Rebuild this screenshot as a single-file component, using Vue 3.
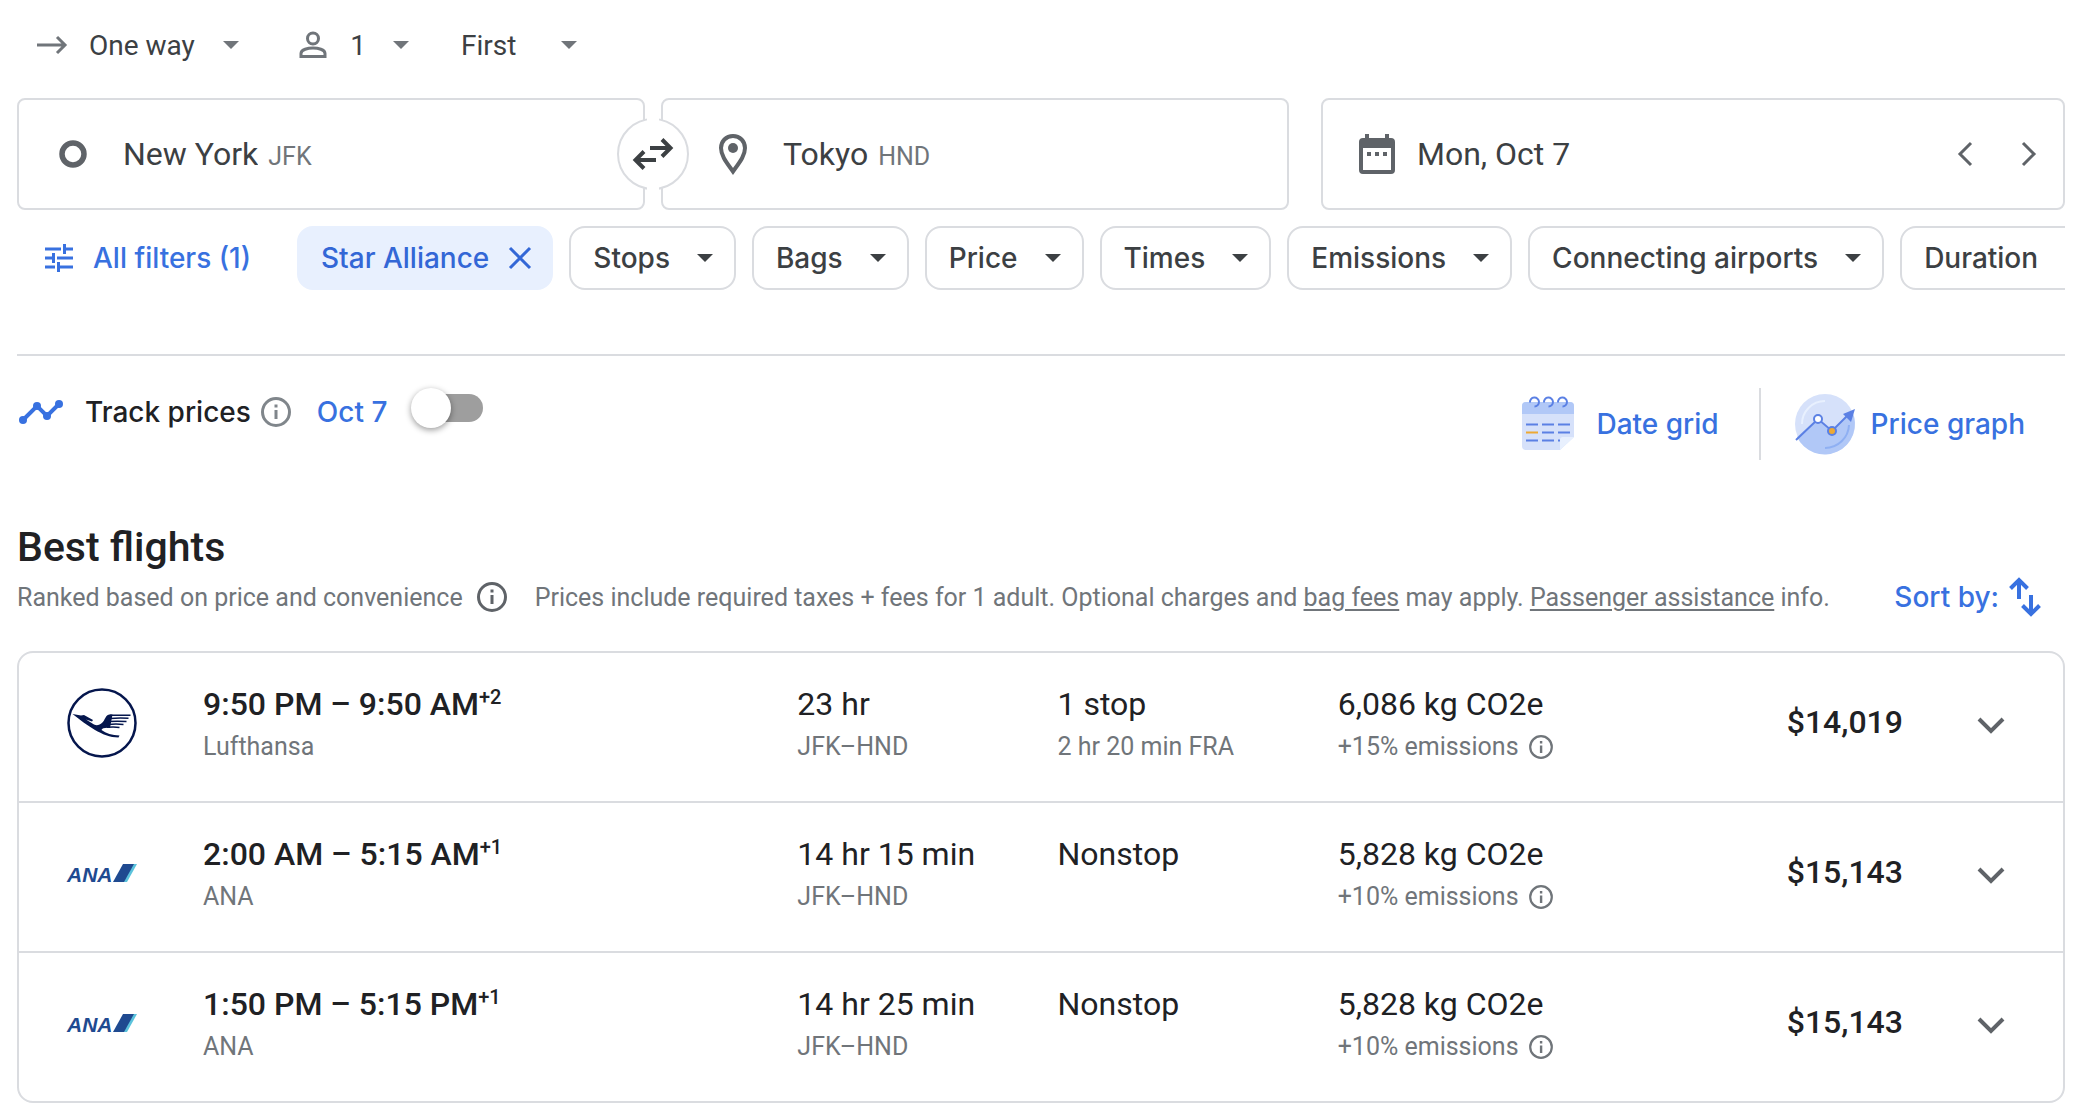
<script setup>
import { ref } from 'vue'

const tripType = ref('One way')
const cabin = ref('First')
const origin = ref('New York')
const destination = ref('Tokyo')
const departure = ref('Mon, Oct 7')
const trackPrices = ref(false)

const filters = ['Stops', 'Bags', 'Price', 'Times', 'Emissions', 'Connecting airports', 'Duration']

const flights = [
    {
        id: 1,
        logo: 'lufthansa',
        times: '9:50 PM – 9:50 AM',
        days: '+2',
        airline: 'Lufthansa',
        duration: '23 hr',
        route: 'JFK–HND',
        stops: '1 stop',
        layover: '2 hr 20 min FRA',
        co2: '6,086 kg CO2e',
        emissions: '+15% emissions',
        price: '$14,019',
    },
    {
        id: 2,
        logo: 'ana',
        times: '2:00 AM – 5:15 AM',
        days: '+1',
        airline: 'ANA',
        duration: '14 hr 15 min',
        route: 'JFK–HND',
        stops: 'Nonstop',
        layover: '',
        co2: '5,828 kg CO2e',
        emissions: '+10% emissions',
        price: '$15,143',
    },
    {
        id: 3,
        logo: 'ana',
        times: '1:50 PM – 5:15 PM',
        days: '+1',
        airline: 'ANA',
        duration: '14 hr 25 min',
        route: 'JFK–HND',
        stops: 'Nonstop',
        layover: '',
        co2: '5,828 kg CO2e',
        emissions: '+10% emissions',
        price: '$15,143',
    },
]

function swapPlaces() {
    const from = origin.value
    origin.value = destination.value
    destination.value = from
}
</script>

<template>
    <main class="page">
        <!-- Trip options -->
        <div class="options">
            <label class="option">
                <svg class="option-arrow" width="30" height="20" viewBox="0 0 30 20" fill="none" stroke="currentColor" stroke-width="3">
                    <path d="M0 10h28M20 2l8 8-8 8" />
                </svg>
                <select v-model="tripType" aria-label="Trip type">
                    <option>One way</option>
                </select>
                <svg class="caret" width="16" height="8" viewBox="0 0 16 8"><path d="M0 0h16l-8 8z" fill="currentColor" /></svg>
            </label>
            <button class="option passengers" type="button" aria-label="1 passenger">
                <svg class="icon-gray" width="28" height="28" viewBox="0 0 28 28" fill="none" stroke="currentColor" stroke-width="3">
                    <circle cx="14" cy="7.500" r="5.500" />
                    <path d="M2 25.500v-3c0-4 7-5.500 12-5.500s12 1.500 12 5.500v3z" />
                </svg>
                <span class="count">1</span>
                <svg class="caret" width="16" height="8" viewBox="0 0 16 8"><path d="M0 0h16l-8 8z" fill="currentColor" /></svg>
            </button>
            <label class="option cabin">
                <select v-model="cabin" aria-label="Cabin class">
                    <option>First</option>
                </select>
                <svg class="caret" width="16" height="8" viewBox="0 0 16 8"><path d="M0 0h16l-8 8z" fill="currentColor" /></svg>
            </label>
        </div>

        <!-- Search fields -->
        <div class="search">
            <div class="places">
                <label class="field">
                    <svg class="field-icon" width="28" height="28" viewBox="0 0 28 28"><circle cx="14" cy="14" r="11" fill="none" stroke="currentColor" stroke-width="5.500" /></svg>
                    <input v-model="origin" class="place" type="text" aria-label="Where from?">
                    <span class="code">JFK</span>
                </label>
                <button class="swap" type="button" aria-label="Swap origin and destination" @click="swapPlaces">
                    <svg width="40" height="32" viewBox="0 0 40 32" fill="none" stroke="currentColor" stroke-width="4">
                        <path d="M17 10h20M29 1.500l8.500 8.500-8.500 8.500M23 22H3M11 13.500l-8.500 8.500 8.500 8.500" />
                    </svg>
                </button>
                <label class="field">
                    <svg class="field-icon" width="28" height="40" viewBox="0 0 28 40">
                        <path d="M14 2C7 2 2 7.300 2 14c0 8 6 15 12 23.500C20 29 26 22 26 14 26 7.300 21 2 14 2z" fill="none" stroke="currentColor" stroke-width="4" />
                        <circle cx="14" cy="14" r="5" fill="currentColor" />
                    </svg>
                    <input v-model="destination" class="place" type="text" aria-label="Where to?">
                    <span class="code">HND</span>
                </label>
            </div>
            <div class="field date">
                <svg class="field-icon" width="36" height="40" viewBox="0 0 36 40">
                    <path fill="currentColor" fill-rule="evenodd" d="M6 0h4v4h16V0h4v4h2a4 4 0 0 1 4 4v28a4 4 0 0 1-4 4H4a4 4 0 0 1-4-4V8a4 4 0 0 1 4-4h2zM4 14v22h28V14zM8 18h4v4H8zM16 18h4v4h-4zM24 18h4v4h-4z" />
                </svg>
                <input v-model="departure" class="day" type="text" aria-label="Departure">
                <button class="step" type="button" aria-label="Previous day">
                    <svg width="14" height="24" viewBox="0 0 14 24" fill="none" stroke="currentColor" stroke-width="3"><path d="M13 1L2 12l11 11" /></svg>
                </button>
                <button class="step" type="button" aria-label="Next day">
                    <svg width="14" height="24" viewBox="0 0 14 24" fill="none" stroke="currentColor" stroke-width="3"><path d="M1 1l11 11L1 23" /></svg>
                </button>
            </div>
        </div>

        <!-- Filter chips -->
        <div class="filters">
            <button class="all-filters" type="button">
                <svg width="28" height="28" viewBox="0 0 28 28" fill="none" stroke="currentColor" stroke-width="3">
                    <path d="M0 5h16M19.500 0v10M19.500 5H28M0 14h8M8.500 9v10M12 14h16M0 23h10M13.500 18v10M13.500 23H28" />
                </svg>
                All filters (1)
            </button>
            <button class="chip chip-on" type="button">
                Star Alliance
                <svg width="22" height="22" viewBox="0 0 22 22" fill="none" stroke="currentColor" stroke-width="3"><path d="M1 1l20 20M21 1L1 21" /></svg>
            </button>
            <button v-for="name in filters" :key="name" class="chip" type="button">
                {{ name }}
                <svg width="16" height="8" viewBox="0 0 16 8"><path d="M0 0h16l-8 8z" fill="currentColor" /></svg>
            </button>
        </div>

        <!-- Price tools -->
        <div class="tools">
            <div class="track">
                <svg class="trend" width="46" height="26" viewBox="0 0 46 26" fill="currentColor">
                    <path d="M6 21L20 7l10 10L42 5" fill="none" stroke="currentColor" stroke-width="4" />
                    <circle cx="6" cy="21" r="4" /><circle cx="20" cy="7" r="4" /><circle cx="30" cy="17" r="4" /><circle cx="42" cy="5" r="4" />
                </svg>
                <label class="track-label" for="track-prices">Track prices</label>
                <svg class="track-info" width="30" height="30" viewBox="0 0 30 30">
                    <circle cx="15" cy="15" r="13.500" fill="none" stroke="currentColor" stroke-width="3" />
                    <path d="M13.500 7.500h3v3h-3zM13.500 13h3v9h-3z" fill="currentColor" />
                </svg>
                <span class="track-date">Oct 7</span>
                <input id="track-prices" v-model="trackPrices" class="toggle" type="checkbox" role="switch">
            </div>
            <button class="tool" type="button">
                <svg width="52" height="54" viewBox="0 0 52 54" fill="none">
                    <path d="M0 9a4 4 0 0 1 4-4h44a4 4 0 0 1 4 4v31L38 53H4a4 4 0 0 1-4-4z" fill="#d6e1fa" />
                    <path d="M0 17V9a4 4 0 0 1 4-4h44a4 4 0 0 1 4 4v8z" fill="#b1c8f7" />
                    <path d="M4 27.500h12M20 27.500h12M36 27.500h12M20 35.500h12M36 35.500h12M4 43.500h12M20 43.500h12M36 43.500h2" stroke="#5b80e4" stroke-width="2" />
                    <path d="M4 35.500h12" stroke="#eda934" stroke-width="2" />
                    <path d="M38 53V43a3 3 0 0 1 3-3h11z" fill="#e8f0fe" />
                    <path d="M8 5.500a4.500 4.500 0 1 1 4.500 4M22 5.500a4.500 4.500 0 1 1 4.500 4M36 5.500a4.500 4.500 0 1 1 4.500 4" stroke="#5b80e4" stroke-width="2" />
                </svg>
                Date grid
            </button>
            <button class="tool graph" type="button">
                <svg width="60" height="60" viewBox="0 0 60 60" fill="none">
                    <circle cx="30" cy="30" r="30" fill="#d6e1fa" />
                    <path d="M2 43L22 25l14 12 21-20a30 30 0 0 1-55 26z" fill="#b1c8f7" />
                    <path d="M7 30A23 23 0 0 1 30 7" stroke="#e8f0fe" stroke-width="2" />
                    <path d="M54 31A24 24 0 0 1 30 54" stroke="#8fb0f3" stroke-width="2" />
                    <path d="M1 46L23 25l14 12 18-18" stroke="#5b80e4" stroke-width="2" />
                    <path d="M60 15l-4 13-8-8z" fill="#5b80e4" />
                    <circle cx="23" cy="25" r="4" fill="#fff" stroke="#5b80e4" stroke-width="2" />
                    <circle cx="37" cy="37" r="4" fill="#eda934" stroke="#5b80e4" stroke-width="2" />
                </svg>
                Price graph
            </button>
        </div>

        <!-- Results -->
        <h1>Best flights</h1>
        <div class="notes">
            <span>Ranked based on price and convenience</span>
            <svg class="icon-dark" width="30" height="30" viewBox="0 0 30 30">
                <circle cx="15" cy="15" r="13.500" fill="none" stroke="currentColor" stroke-width="3" />
                <path d="M13.500 7.500h3v3h-3zM13.500 13h3v9h-3z" fill="currentColor" />
            </svg>
            <p>Prices include required taxes + fees for 1 adult. Optional charges and <a href="#">bag fees</a> may apply. <a href="#">Passenger assistance</a> info.</p>
            <button class="sort" type="button">
                Sort by:
                <svg width="32" height="40" viewBox="0 0 32 40" fill="none" stroke="currentColor" stroke-width="4">
                    <path d="M10 22V3M1.500 11.500L10 3l8.500 8.500M22 18v19M13.500 28.500L22 37l8.500-8.500" />
                </svg>
            </button>
        </div>

        <ul class="flights">
            <li v-for="flight in flights" :key="flight.id" class="flight">
                <div class="logo">
                    <svg v-if="flight.logo === 'lufthansa'" width="70" height="70" viewBox="0 0 70 70">
                        <circle cx="35" cy="35" r="33.500" fill="none" stroke="#05164d" stroke-width="2.500" />
                        <path fill="#05164d" d="M5.500 26l8.500 1.500 3-.5 9 5-1 1.500-6-2 8 5c4 2 8-.5 10-4 2-4 3-6 6-6h2.500l-2.500 13.500c-5-.5-8 .5-8.500 2 4.500 3.500 10.500 5 18 5.500l-1 2c-8.500 0-16.500-3.500-23.500-7.500-8-5-15-10-22.500-16z" />
                        <path fill="none" stroke="#05164d" stroke-width="1.500" d="M43 27.300c8-.3 14-.2 20.500 0M43 30.500c7-.6 13-.5 18.500-.2M42 33.500c7-.6 12-.4 17.500 0M41 36.500c6-.6 11-.5 15.500 0M40 39.300c5-.6 9-.5 12.500.2" />
                    </svg>
                    <svg v-else width="70" height="20" viewBox="0 0 70 20">
                        <text class="ana-word" x="0" y="19">ANA</text>
                        <path d="M57 1h13L60 19h-8z" fill="#5cc3dc" />
                        <path d="M56 1h11L57 19H46z" fill="#1f4a90" />
                    </svg>
                </div>
                <div>
                    <div class="main times">{{ flight.times }}<sup>{{ flight.days }}</sup></div>
                    <div class="sub">{{ flight.airline }}</div>
                </div>
                <div>
                    <div class="main">{{ flight.duration }}</div>
                    <div class="sub">{{ flight.route }}</div>
                </div>
                <div>
                    <div class="main">{{ flight.stops }}</div>
                    <div class="sub">{{ flight.layover }}</div>
                </div>
                <div>
                    <div class="main">{{ flight.co2 }}</div>
                    <div class="sub">
                        {{ flight.emissions }}
                        <svg width="24" height="24" viewBox="0 0 24 24">
                            <circle cx="12" cy="12" r="10.800" fill="none" stroke="currentColor" stroke-width="2.200" />
                            <path d="M10.900 6h2.400v2.400h-2.400zM10.900 10.500h2.400v7.500h-2.400z" fill="currentColor" />
                        </svg>
                    </div>
                </div>
                <div class="price">{{ flight.price }}</div>
                <button class="expand" type="button" aria-label="Flight details">
                    <svg width="28" height="18" viewBox="0 0 28 18" fill="none" stroke="currentColor" stroke-width="4"><path d="M2 3l12 12L26 3" /></svg>
                </button>
            </li>
        </ul>
    </main>
</template>

<style>
body {
    margin: 0;
    background: #fff;
}
</style>

<style scoped>
.page {
    padding: 20px 11px 17px 17px;
    font-family: Roboto, "Liberation Sans", sans-serif;
    font-size: 28px;
    color: #202124;
}
.page * {
    box-sizing: border-box;
}
svg {
    display: block;
    flex: none;
    overflow: visible;
}
button,
input,
select {
    margin: 0;
    padding: 0;
    border: 0;
    background: none;
    color: inherit;
    font: inherit;
}
button {
    cursor: pointer;
}
select {
    appearance: none;
}

/* ── Trip options ── */
.options {
    display: flex;
    align-items: center;
    height: 50px;
    margin-bottom: 28px;
    padding-left: 20px;
    color: #3c4043;
}
.option {
    display: flex;
    align-items: center;
    gap: 28px;
}
.option-arrow {
    margin-right: -6px;
    color: #70757a;
}
.passengers {
    gap: 16px;
    margin-left: 60px;
}
.count {
    width: 34px;
    padding-right: 4px;
}
.cabin {
    gap: 44px;
    margin-left: 52px;
}
.caret,
.icon-gray {
    color: #70757a;
}

/* ── Search fields ── */
.search {
    display: grid;
    grid-template-columns: 1272fr 744fr;
    gap: 32px;
    margin-bottom: 16px;
}
.places {
    position: relative;
    display: grid;
    grid-template-columns: 1fr 1fr;
    gap: 16px;
}
.field {
    display: flex;
    align-items: center;
    height: 112px;
    padding-left: 40px;
    border: 2px solid #dadce0;
    border-radius: 8px;
    color: #3c4043;
    font-size: 32px;
}
.places .field:last-child {
    padding-left: 56px;
}
.field-icon {
    color: #5f6368;
}
.place {
    field-sizing: content;
    margin-left: 36px;
}
.code {
    margin-left: 10px;
    padding-top: 4px;
    color: #70757a;
    font-size: 25px;
}
.swap {
    position: absolute;
    top: 50%;
    left: 50%;
    display: flex;
    align-items: center;
    justify-content: center;
    width: 72px;
    height: 72px;
    border: 2px solid #dadce0;
    border-radius: 50%;
    background: #fff;
    color: #3c4043;
    transform: translate(-50%, -50%);
}
/* hides the circle's outline in the gap between both fields */
.swap::before {
    content: "";
    position: absolute;
    top: -4px;
    bottom: -4px;
    left: 28px;
    width: 12px;
    background: #fff;
}
.swap svg {
    position: relative;
}
.date {
    padding-left: 36px;
    padding-right: 18px;
}
.day {
    flex: 1;
    min-width: 0;
    margin-left: 22px;
}
.step {
    display: flex;
    justify-content: center;
    width: 32px;
    margin-left: 32px;
    color: #5f6368;
}

/* ── Filter chips ── */
.filters,
.tools {
    font-family: Inter, Roboto, sans-serif;
    font-weight: 500;
}
.filters {
    display: flex;
    gap: 16px;
    overflow: hidden;
    margin-bottom: 64px;
    white-space: nowrap;
}
.all-filters {
    display: flex;
    align-items: center;
    gap: 20px;
    flex: none;
    height: 64px;
    padding: 0 30px 0 28px;
    color: #3871e0;
}
.chip {
    display: flex;
    align-items: center;
    gap: 27px;
    flex: none;
    height: 64px;
    padding: 0 21px 0 22px;
    border: 2px solid #dadce0;
    border-radius: 16px;
    color: #3c4043;
}
.chip-on {
    gap: 20px;
    padding-right: 20px;
    border-color: #e8f0fe;
    background: #e8f0fe;
    color: #3367d6;
}

/* ── Price tools ── */
.tools {
    display: flex;
    align-items: flex-start;
    padding: 32px 40px 0 0;
    border-top: 2px solid #dadce0;
}
.track {
    display: flex;
    align-items: center;
    height: 48px;
    margin-right: auto;
}
.trend {
    color: #3871e0;
}
.track-label {
    margin: 0 10px 0 22px;
}
.track-info {
    color: #80868b;
}
.track-date {
    margin: 0 36px 0 26px;
    color: #3871e0;
}
.toggle {
    appearance: none;
    position: relative;
    width: 60px;
    height: 28px;
    margin-bottom: 8px;
    border-radius: 14px;
    background: #9e9e9e;
}
.toggle::before {
    content: "";
    position: absolute;
    top: -6px;
    left: -12px;
    width: 40px;
    height: 40px;
    border-radius: 50%;
    background: #fff;
    box-shadow: 0 2px 6px rgba(0, 0, 0, 0.4);
}
.toggle:checked {
    background: #8ab4f8;
}
.toggle:checked::before {
    left: 28px;
    background: #1a73e8;
}
.tool {
    display: flex;
    align-items: center;
    gap: 22px;
    height: 72px;
    color: #3871e0;
}
.graph {
    gap: 16px;
    margin-left: 40px;
    padding-left: 34px;
    border-left: 2px solid #dadce0;
}

/* ── Results ── */
h1 {
    margin: 60px 0 0;
    font-size: 41px;
    font-weight: 500;
    line-height: 54px;
}
.notes {
    display: flex;
    align-items: center;
    height: 46px;
    margin-bottom: 31px;
    padding-right: 24px;
    color: #70757a;
    font-size: 25px;
    white-space: nowrap;
}
.notes p {
    margin: 0 auto 0 28px;
}
.notes a {
    color: inherit;
    text-decoration-thickness: 2px;
    text-underline-offset: 3px;
}
.icon-dark {
    margin-left: 14px;
    color: #5f6368;
}
.sort {
    display: flex;
    align-items: center;
    gap: 10px;
    color: #3871e0;
    font-family: Inter, Roboto, sans-serif;
    font-size: 28px;
    font-weight: 500;
}
.flights {
    margin: 0;
    padding: 0;
    border: 2px solid #dadce0;
    border-radius: 16px;
    list-style: none;
}
.flight {
    display: grid;
    grid-template-columns: 136px 594fr 260fr 280fr 565fr 102px;
    min-height: 148px;
    padding: 31px 58px 0 48px;
}
.flight + .flight {
    border-top: 2px solid #dadce0;
    min-height: 150px;
}
.flight > :nth-child(5) {
    grid-column: 5;
    grid-row: 1;
}
.logo {
    display: flex;
    align-items: center;
    height: 78px;
}
.ana-word {
    fill: #1f4a90;
    font: italic bold 21px "Liberation Sans", sans-serif;
}
.main {
    font-size: 32px;
    line-height: 40px;
}
.times,
.price {
    font-weight: 500;
}
sup {
    font-size: 20px;
    line-height: 0;
    vertical-align: 11px;
}
.sub {
    display: flex;
    align-items: center;
    gap: 10px;
    margin-top: 5px;
    min-height: 36px;
    color: #70757a;
    font-size: 25px;
    line-height: 36px;
}
.price {
    grid-column: 5;
    grid-row: 1;
    height: 76px;
    font-size: 32px;
    line-height: 76px;
    text-align: right;
}
.expand {
    display: flex;
    align-items: center;
    justify-content: flex-end;
    height: 82px;
    color: #5f6368;
}
</style>
